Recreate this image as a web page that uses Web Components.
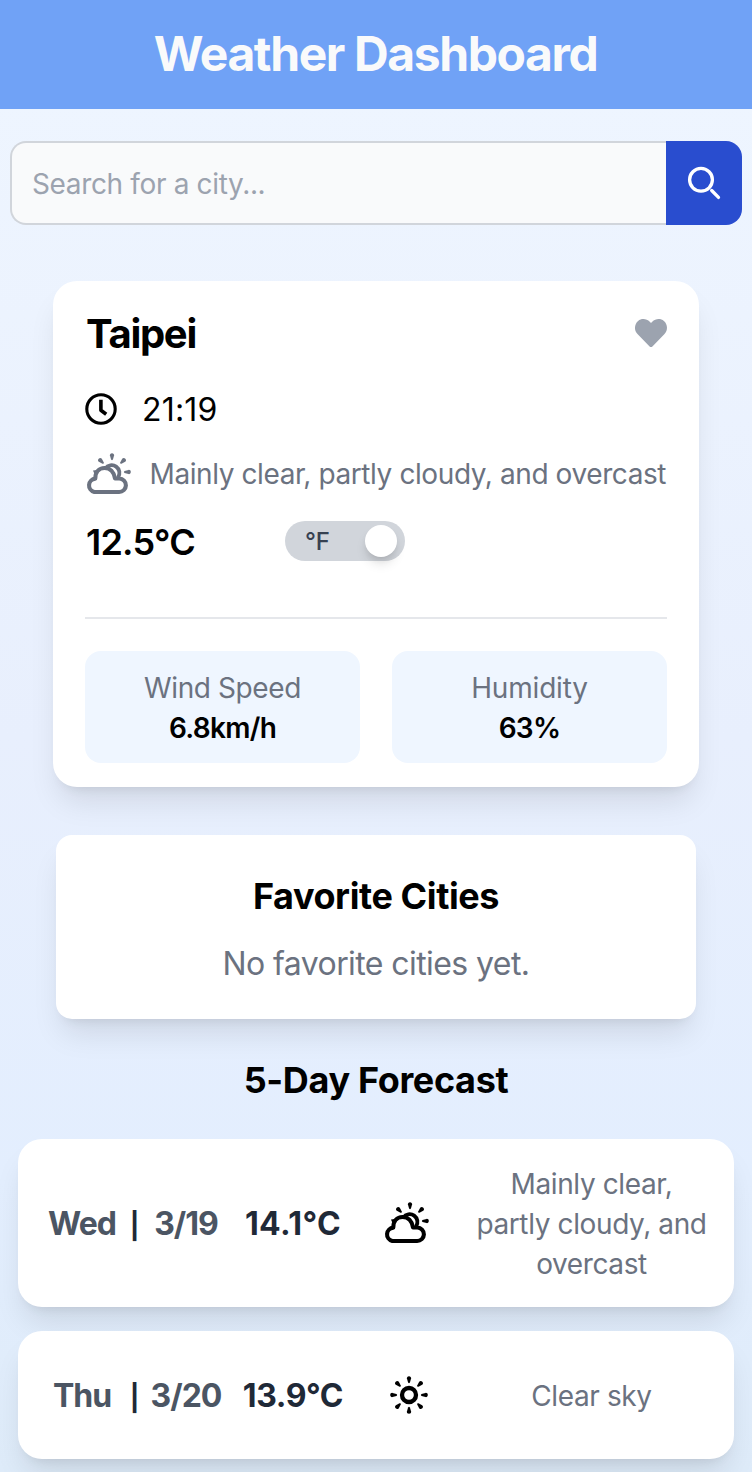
<!DOCTYPE html>
<html lang="en"><head><meta charset="utf-8"><title>Weather Dashboard</title>
<style>
html,body{margin:0}
body{font-family:Inter,"Liberation Sans",sans-serif;color:#000;background:linear-gradient(#eff6ff,#e8effd 50%,#e3eefe 80%,#deebf9 1472px);height:1472px;overflow:hidden}
</style></head><body>
<weather-app></weather-app>
<script>
const define=(name,css,html)=>customElements.define(name,class extends HTMLElement{
  constructor(){super();this.attachShadow({mode:'open'}).innerHTML=`<style>*{box-sizing:border-box}:host{display:block;box-sizing:border-box}${css}</style>${typeof html==='function'?html(this):html}`}
});
const drop='M0-10.3C-1.4-10.3-2.3-9.3-2.1-8L-.9-4Q0-2.600.9-4L2.1-8C2.3-9.3 1.4-10.3 0-10.3z';
const rays=(angles,tf)=>`<g transform="${tf}" fill="currentColor">${angles.map(a=>`<path transform="rotate(${a}) translate(0 -8.5)" d="${drop}"/>`).join('')}</g>`;
const icons={
 search:['0 0 36 36','<circle cx="15" cy="14.8" r="11.4" fill="none" stroke="currentColor" stroke-width="3.3"/><path d="M25.7 25.5l6.8 6.9" stroke="currentColor" stroke-width="3.3" stroke-linecap="round"/>'],
 heart:['0 0 512 512','<path fill="currentColor" d="M462.3 62.6C407.5 15.9 326 24.3 275.7 76.2L256 96.5l-19.7-20.3C186.1 24.3 104.5 15.9 49.7 62.6c-62.8 53.6-66.1 149.8-9.9 207.9l193.5 199.8c12.5 12.9 32.8 12.9 45.3 0l193.5-199.8c56.3-58.1 53-154.3-9.8-207.9z"/>'],
 clock:['0 0 32 32','<circle cx="16" cy="16" r="14.2" fill="none" stroke="currentColor" stroke-width="3.1"/><path fill="none" stroke="currentColor" stroke-width="3.6" stroke-linejoin="round" d="M15.9 6.8V17.2L21.2 21.2"/>'],
 sun:['0 0 48 48','<circle cx="24" cy="24" r="7" fill="none" stroke="currentColor" stroke-width="4.3"/>'+rays([0,45,90,135,180,225,270,315],'translate(24 24)')],
 overcast:['0 0 48 48','<path fill="none" stroke="currentColor" stroke-width="4.1" stroke-linejoin="round" d="M9.3 42H34A6.7 6.7 0 0 0 34.3 28.500H30C29 22 25 18 19.500 18 14 18 10.300 22 10.300 28.600A6.8 6.8 0 0 0 9.300 42z"/><path fill="none" stroke="currentColor" stroke-width="3.8" d="M20.3 18.500A7.500 7.500 0 1 1 33 27.500"/><path fill="currentColor" d="M8 20.500l4-.5-2.500 4z"/>'+rays([-45,0,45,90],'translate(27 22)')]
};
define('ui-icon','svg{display:block;width:100%;height:100%;overflow:visible}',e=>{const[v,p]=icons[e.getAttribute('name')];return `<svg viewBox="${v}">${p}</svg>`});
define('app-header','header{height:109px;background:#70a2f6;text-align:center}h1{margin:0;font-size:48px;line-height:108px;font-weight:700;letter-spacing:-1.4px;text-indent:-1px;color:#f9fafb}','<header><h1><slot></slot></h1></header>');
define('search-bar',':host{display:flex;height:84px;margin:32px 10px 56px}.field{flex:1;display:flex;align-items:center;border:2px solid #d1d5db;border-right:0;border-radius:16px 0 0 16px;background:#f9fafb;padding:2px 20px 0;font-size:28px;letter-spacing:-.35px;color:#9ca3af}button{width:76px;border:0;padding:0;background:#294dcf;border-radius:0 16px 16px 0;color:#fff;display:grid;place-items:center}ui-icon{width:36px;height:36px}','<div class="field"><span>Search for a city...</span></div><button aria-label="Search"><ui-icon name="search"></ui-icon></button>');
define('unit-toggle',':host{display:flex;justify-content:space-between;align-items:center;width:120px;height:40px;border-radius:20px;background:#d1d5db;padding:4px 8px 4px 20px;font-size:24px;font-weight:500;letter-spacing:-.3px;color:#374151;margin-bottom:2px}i{width:32px;height:32px;border-radius:50%;background:#fff;box-shadow:0 8px 12px -2px #0002,0 4px 8px -4px #0002}','<span>°F</span><i></i>');
define('stat-tile',':host{height:112px;border-radius:16px;background:#eff6ff;padding:17px 0;text-align:center;font-size:28px;line-height:40px}.l{color:#6b7280;letter-spacing:-.4px}:host([label=Humidity]) .l{letter-spacing:-.2px}.v{font-weight:600;letter-spacing:-.7px}',e=>`<div class="l">${e.getAttribute('label')}</div><div class="v"><slot></slot></div>`);
define('city-card',`:host{width:646px;height:506px;margin:0 auto 48px;padding:32px;background:#fff;border-radius:24px;box-shadow:0 20px 30px -6px #0000001a,0 8px 12px -8px #0000001a}
ui-icon{flex:none}.row{display:flex;align-items:center}.top{height:42px;justify-content:space-between}h2{margin:0;font-size:40px;line-height:42px;letter-spacing:-1.3px;padding-left:1px}.heart{width:32px;height:32px;color:#9ca3af;margin-bottom:2px}.time{height:44px;margin-top:32px;font-size:32px;gap:25px;letter-spacing:.2px}.clock{width:32px;height:32px}.desc{height:48px;margin-top:19px;font-size:28px;color:#6b7280;gap:16.500px;letter-spacing:-.41px}.wx{width:48px;height:48px}.temp{height:48px;margin-top:20px;font-size:36px;font-weight:600}.temp b{font-weight:600;width:200px;padding-left:1px;letter-spacing:-.8px}.stats{display:grid;grid-template-columns:1fr 1fr;gap:32px;margin-top:51px;padding-top:32px;border-top:2px solid #e5e7eb}.desc span{white-space:nowrap}`,
`<div class="row top"><h2><span>Taipei</span></h2><ui-icon class="heart" name="heart"></ui-icon></div>
<div class="row time"><ui-icon class="clock" name="clock"></ui-icon><span>21:19</span></div>
<div class="row desc"><ui-icon class="wx" name="overcast"></ui-icon><span>Mainly clear, partly cloudy, and overcast</span></div>
<div class="row temp"><b><span>12.5°C</span></b><unit-toggle></unit-toggle></div>
<div class="stats"><stat-tile label="Wind Speed">6.8km/h</stat-tile><stat-tile label="Humidity">63%</stat-tile></div>`);
define('favorite-cities',':host{width:640px;height:184px;margin:0 auto 37px;padding-top:38px;background:#fff;border-radius:16px;text-align:center;box-shadow:0 20px 30px -6px #0000001a,0 8px 12px -8px #0000001a}h2{margin:0 0 23px;font-size:36px;line-height:46px;letter-spacing:-.4px;font-weight:700}p{margin:0;font-size:32px;line-height:44px;letter-spacing:-.58px;color:#6b7280}','<h2>Favorite Cities</h2><p>No favorite cities yet.</p>');
define('forecast-row',`:host{display:grid;grid-template-columns:80px 25px 78px 13px 110px 35px 48px 18px 1fr;align-items:center;height:var(--h);margin:0 18px 24px;padding:0 0 0 24px;background:#fff;border-radius:24px;box-shadow:0 20px 30px -6px #0000001a,0 8px 12px -8px #0000001a;font-size:32px;font-weight:600;color:#1f2937;text-align:center}
.g{color:#4b5563;font-weight:700;letter-spacing:-1px}.bar{font-size:26px;font-weight:700;padding-top:4px}.t{grid-column:5;font-weight:700;letter-spacing:var(--t,0)}ui-icon{grid-column:7;width:48px;height:48px;color:#000}ui-icon[name=sun]{margin-left:2px}.d{grid-column:9;font-weight:400;font-size:28px;line-height:40px;letter-spacing:-.38px;color:#6b7280;justify-self:center;width:240px;padding-top:2px}span{white-space:nowrap}.d{white-space:normal}`,
e=>{const a=n=>e.getAttribute(n);return `<span class="g">${a('day')}</span><span class="bar">|</span><span class="g">${a('date')}</span><span class="t">${a('temp')}</span><ui-icon name="${a('icon')}"></ui-icon><span class="d"><slot></slot></span>`});
define('weather-app','h2{margin:0 0 35px;text-align:center;font-size:36px;line-height:48px;letter-spacing:-.35px;font-weight:700}',
`<app-header>Weather Dashboard</app-header><search-bar></search-bar><city-card></city-card><favorite-cities></favorite-cities><h2>5-Day Forecast</h2>
<forecast-row style="--h:168px;--t:.4px" day="Wed" date="3/19" temp="14.1°C" icon="overcast">Mainly clear, partly cloudy, and overcast</forecast-row>
<forecast-row style="--h:128px;--t:-.4px" day="Thu" date="3/20" temp="13.9°C" icon="sun">Clear sky</forecast-row>`);
</script></body></html>
